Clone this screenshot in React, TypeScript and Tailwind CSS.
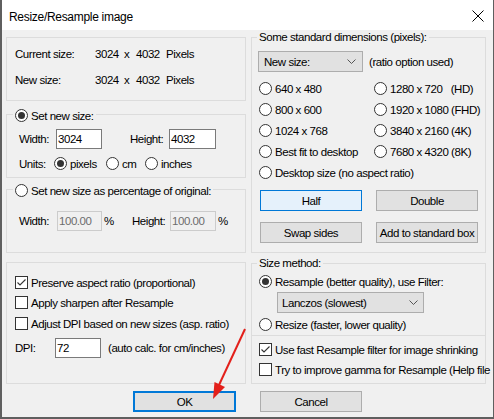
import React from 'react';

const Radio = ({ checked = false }: { checked?: boolean }) => (
  <span className="flex h-[13px] w-[13px] shrink-0 items-center justify-center rounded-full border border-[#333333] bg-white">
    {checked && <span className="h-[7px] w-[7px] rounded-full bg-[#333333]" />}
  </span>
);

const Check = ({ checked = false }: { checked?: boolean }) => (
  <span className="flex h-[13px] w-[13px] shrink-0 items-center justify-center border border-[#333333] bg-white">
    {checked && (
      <svg width="11" height="11" viewBox="0 0 11 11">
        <path d="M1.5 5.5 L4 8 L9.5 2.5" fill="none" stroke="#333333" strokeWidth="1.1" />
      </svg>
    )}
  </span>
);

const Chevron = () => (
  <svg width="9" height="5" viewBox="0 0 9 5">
    <path d="M0.5 0.5 L4.5 4.5 L8.5 0.5" fill="none" stroke="#555555" strokeWidth="1" />
  </svg>
);

const Input = ({ value, className }: { value: string; className: string }) => (
  <div className={`flex h-[20px] items-center border border-[#7a7a7a] bg-white pl-[1px] ${className}`}>{value}</div>
);

const DisabledInput = ({ value, className }: { value: string; className: string }) => (
  <div className={`flex h-[20px] items-center border border-[#cccccc] bg-[#f0f0f0] pl-[1px] text-[#6d6d6d] ${className}`}>
    {value}
  </div>
);

const Btn = ({ label, active = false }: { label: string; active?: boolean }) => (
  <div
    className={
      active
        ? 'flex h-[21px] w-[102px] items-center justify-center border border-[#0078d7] bg-[#e5f1fb]'
        : 'flex h-[21px] w-[102px] items-center justify-center border border-[#adadad] bg-[#e1e1e1]'
    }
  >
    {label}
  </div>
);

const RadioItem = ({ label, checked = false }: { label: string; checked?: boolean }) => (
  <div className="flex h-[21px] items-center gap-[3px] whitespace-pre">
    <Radio checked={checked} />
    <span>{label}</span>
  </div>
);

const CheckItem = ({ label, checked = false, className = '' }: { label: string; checked?: boolean; className?: string }) => (
  <div className={`flex h-[13px] items-center gap-[3px] whitespace-nowrap ${className}`}>
    <Check checked={checked} />
    <span>{label}</span>
  </div>
);

const Dims = () => (
  <div className="flex">
    <span className="w-[29px]">3024</span>
    <span className="w-[12px]">x</span>
    <span className="w-[30px]">4032</span>
    <span>Pixels</span>
  </div>
);

export default function App() {
  return (
    <div className="relative h-[419px] w-[494px] overflow-hidden border-b-2 border-l-2 border-r border-[#5f5f5f] bg-[#f0f0f0] font-['Liberation_Sans',Arial,sans-serif] text-[11.5px] leading-[14px] tracking-[-0.45px] text-black">
      {/* title bar */}
      <div className="flex h-[30px] items-center justify-between bg-white pl-[7px] pr-[9px] pt-[3px]">
        <span className="text-[12px] tracking-[-0.3px]">Resize/Resample image</span>
        <svg width="12" height="12" viewBox="0 0 12 12" className="mb-[1px]">
          <path d="M0.5 0.5 L11.5 11.5 M11.5 0.5 L0.5 11.5" stroke="#000000" strokeWidth="1" />
        </svg>
      </div>

      <div className="pl-[4px]">
        <div className="flex gap-[5px]">
          {/* left column */}
          <div className="flex w-[240px] flex-col">
            <fieldset className="mt-[7px] h-[64px] min-w-0 border border-[#dcdcdc] pl-[8px] pt-[9px]">
              <div className="flex h-[14px] items-center">
                <span className="w-[80px]">Current size:</span>
                <Dims />
              </div>
              <div className="mt-[12px] flex h-[14px] items-center">
                <span className="w-[80px]">New size:</span>
                <Dims />
              </div>
            </fieldset>

            <fieldset className="mt-[5px] h-[72px] min-w-0 border border-[#dcdcdc]">
              <legend className="ml-[6px] flex h-[16px] items-end px-[2px]">
                <span className="flex h-[13px] items-center gap-[3px]">
                  <Radio checked />
                  <span>Set new size:</span>
                </span>
              </legend>
              <div className="pl-[12px]">
                <div className="mt-[7px] flex h-[20px] items-center">
                  <span className="w-[37px]">Width:</span>
                  <Input value="3024" className="w-[46px]" />
                  <span className="ml-[28px] w-[39px]">Height:</span>
                  <Input value="4032" className="w-[47px]" />
                </div>
                <div className="mt-[8px] flex h-[13px] items-center">
                  <span className="w-[35px]">Units:</span>
                  <div className="flex w-[52px] items-center gap-[3px]">
                    <Radio checked />
                    <span>pixels</span>
                  </div>
                  <div className="flex w-[39px] items-center gap-[3px]">
                    <Radio />
                    <span>cm</span>
                  </div>
                  <div className="flex items-center gap-[3px]">
                    <Radio />
                    <span>inches</span>
                  </div>
                </div>
              </div>
            </fieldset>

            <fieldset className="mt-[3px] h-[72px] min-w-0 border border-[#dcdcdc]">
              <legend className="ml-[6px] flex h-[16px] items-end px-[2px]">
                <span className="flex h-[13px] items-center gap-[3px] whitespace-nowrap">
                  <Radio />
                  <span>Set new size as percentage of original:</span>
                </span>
              </legend>
              <div className="pl-[12px]">
                <div className="mt-[14px] flex h-[20px] items-center">
                  <span className="w-[38px]">Width:</span>
                  <DisabledInput value="100.00" className="w-[45px]" />
                  <span className="w-[30px] pl-[2px]">%</span>
                  <span className="w-[38px]">Height:</span>
                  <DisabledInput value="100.00" className="w-[46px]" />
                  <span className="pl-[2px]">%</span>
                </div>
              </div>
            </fieldset>

            <fieldset className="mt-[9px] h-[122px] min-w-0 border border-[#dcdcdc] pl-[8px] pt-[13px]">
              <CheckItem label="Preserve aspect ratio (proportional)" checked />
              <CheckItem label="Apply sharpen after Resample" className="mt-[7px]" />
              <CheckItem label="Adjust DPI based on new sizes (asp. ratio)" className="mt-[8px]" />
              <div className="mt-[8px] flex h-[20px] items-center">
                <span className="w-[40px]">DPI:</span>
                <Input value="72" className="w-[46px]" />
                <span className="ml-[7px] whitespace-nowrap">(auto calc. for cm/inches)</span>
              </div>
            </fieldset>
          </div>

          {/* right column */}
          <div className="flex w-[235px] flex-col">
            <fieldset className="h-[223px] min-w-0 border border-[#dcdcdc]">
              <legend className="ml-[5px] h-[14px] px-[2px] leading-[14px]">Some standard dimensions (pixels):</legend>
              <div className="pl-[6px]">
                <div className="mt-[7px] flex items-center">
                  <div className="flex h-[21px] w-[105px] items-center justify-between border border-[#adadad] bg-[#e1e1e1] pl-[5px] pr-[6px]">
                    <span>New size:</span>
                    <Chevron />
                  </div>
                  <span className="ml-[6px]">(ratio option used)</span>
                </div>
                <div className="mt-[6px] grid grid-cols-[115px_1fr] pl-[1px]">
                  <RadioItem label="640 x 480" />
                  <RadioItem label="1280 x 720   (HD)" />
                  <RadioItem label="800 x 600" />
                  <RadioItem label="1920 x 1080 (FHD)" />
                  <RadioItem label="1024 x 768" />
                  <RadioItem label="3840 x 2160 (4K)" />
                  <RadioItem label="Best fit to desktop" />
                  <RadioItem label="7680 x 4320 (8K)" />
                  <div className="col-span-2">
                    <RadioItem label="Desktop size (no aspect ratio)" />
                  </div>
                </div>
                <div className="mt-[7px] flex gap-[14px] pl-[2px]">
                  <Btn label="Half" active />
                  <Btn label="Double" />
                </div>
                <div className="mt-[11px] flex gap-[14px] pl-[2px]">
                  <Btn label="Swap sides" />
                  <Btn label="Add to standard box" />
                </div>
              </div>
            </fieldset>

            <fieldset className="mt-[3px] h-[80px] min-w-0 border border-[#dcdcdc]">
              <legend className="ml-[5px] h-[14px] px-[2px] leading-[14px]">Size method:</legend>
              <div className="pl-[7px]">
                <div className="mt-[5px] flex h-[13px] items-center gap-[3px]">
                  <Radio checked />
                  <span>Resample (better quality), use Filter:</span>
                </div>
                <div className="ml-[18px] mt-[4px] flex h-[21px] w-[147px] items-center justify-between border border-[#adadad] bg-[#e1e1e1] pl-[4px] pr-[5px]">
                  <span>Lanczos (slowest)</span>
                  <Chevron />
                </div>
                <div className="mt-[5px] flex h-[13px] items-center gap-[3px]">
                  <Radio />
                  <span>Resize (faster, lower quality)</span>
                </div>
              </div>
            </fieldset>

            <fieldset className="h-[48px] min-w-0 border border-t-0 border-[#dcdcdc] pl-[7px] pt-[7px]">
              <CheckItem label="Use fast Resample filter for image shrinking" checked />
              <CheckItem label="Try to improve gamma for Resample (Help file" className="mt-[7px]" />
            </fieldset>
          </div>
        </div>

        <div className="mt-[7px] flex">
          <div className="ml-[127px] flex h-[21px] w-[103px] items-center justify-center border-2 border-[#0078d7] bg-[#e1e1e1]">
            OK
          </div>
          <div className="ml-[24px] flex h-[21px] w-[102px] items-center justify-center border border-[#adadad] bg-[#e1e1e1]">
            Cancel
          </div>
        </div>
      </div>

      {/* red annotation arrow */}
      <svg className="pointer-events-none absolute left-0 top-0" width="494" height="419" viewBox="0 0 494 419">
        <line x1="243" y1="329" x2="217" y2="385" stroke="#e3201b" strokeWidth="2" />
        <polygon points="211,399 212.5,382 223,387" fill="#e3201b" />
      </svg>
    </div>
  );
}
